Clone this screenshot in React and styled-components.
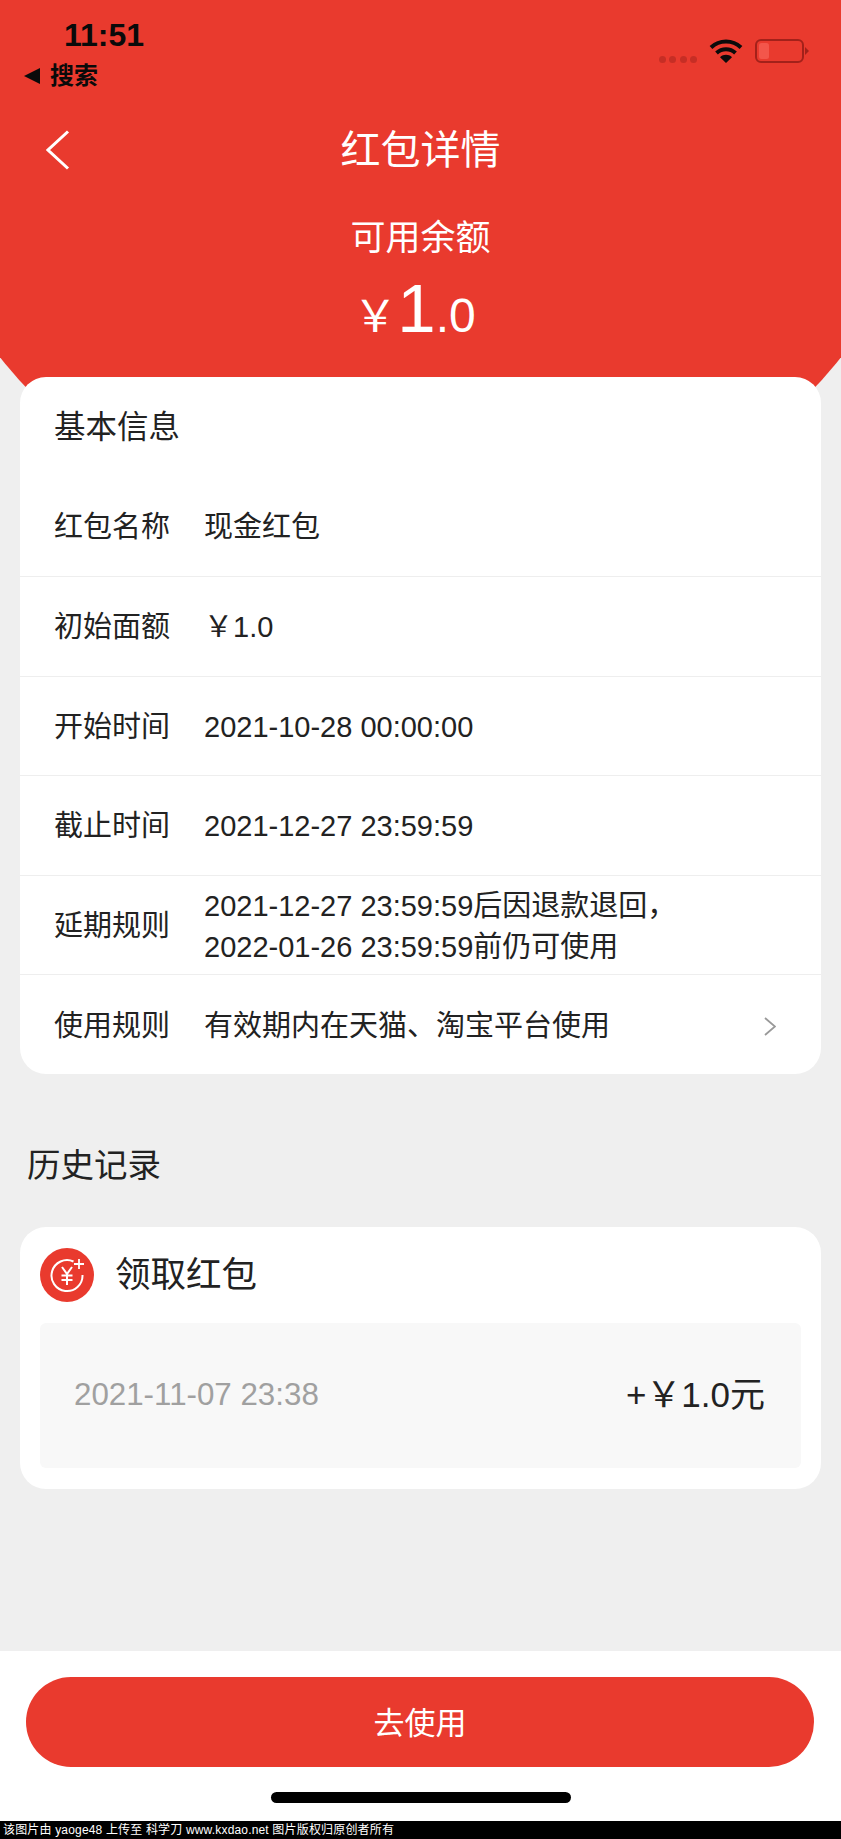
import React from 'react';
import styled, { createGlobalStyle } from 'styled-components';

const RED = '#e93a2e';

const GlobalStyle = createGlobalStyle`
    html, body {
	margin: 0;
	padding: 0;
	background: #efefef;
    }
    body {
	font-family: "Liberation Sans", "Noto Sans CJK SC", sans-serif;
	color: #222;
    }
    * {
	box-sizing: border-box;
    }
`;

const Page = styled.div`
    width: 841px;
    height: 1839px;
    display: flex;
    flex-direction: column;
    overflow: hidden;
    background: #efefef;
`;

// The red block is a big ellipse cut by the page edges, the card covers its lower part
const Header = styled.header`
    height: 451px;
    margin-bottom: -74px;
    background: ${RED};
    clip-path: ellipse(500px 411px at 50% 135px);
    flex-shrink: 0;
`;

const StatusBar = styled.div`
    height: 120px;
    padding: 17px 32px 0 24px;
    display: flex;
    justify-content: space-between;
    align-items: flex-start;
`;

const StatusLeft = styled.div`
    display: flex;
    flex-direction: column;
`;

const Clock = styled.div`
    font-size: 32px;
    line-height: 36px;
    font-weight: 700;
    color: #0a0a0a;
    padding-left: 40px;
`;

const BackApp = styled.div`
    margin-top: 5px;
    display: flex;
    align-items: center;
    gap: 10px;
    font-size: 24px;
    line-height: 36px;
    font-weight: 700;
    color: #0a0a0a;
`;

const Triangle = styled.span`
    width: 0;
    height: 0;
    border-top: 8px solid transparent;
    border-bottom: 8px solid transparent;
    border-right: 16px solid #0a0a0a;
`;

const StatusRight = styled.div`
    display: flex;
    align-items: flex-start;
    margin-top: 21px;
`;

const Dots = styled.div`
    display: flex;
    gap: 3.300px;
    margin: 18px 12px 0 0;
`;

const Dot = styled.span`
    width: 7px;
    height: 7px;
    border-radius: 50%;
    background: #c62e25;
`;

const BatterySvg = styled.svg`
    margin: 1px 0 0 12px;
`;

const NavBar = styled.div`
    height: 60px;
    display: grid;
    grid-template-columns: 1fr auto 1fr;
    align-items: center;
`;

const BackButton = styled.div`
    padding-left: 46px;
    display: flex;
    align-items: center;
`;

const Title = styled.h1`
    margin: 0;
    font-size: 40px;
    line-height: 60px;
    font-weight: 400;
    color: #fff;
`;

const BalanceLabel = styled.div`
    margin-top: 36px;
    text-align: center;
    font-size: 35px;
    line-height: 44px;
    color: #fff;
`;

const Amount = styled.div`
    margin-top: 11px;
    display: flex;
    justify-content: center;
    align-items: baseline;
    color: #fff;
    line-height: 76px;
    padding-right: 12px;
`;

const AmountPart = styled.span`
    font-size: ${props => props.size}px;
`;

const Card = styled.section`
    margin: 0 20px;
    background: #fff;
    border-radius: 26px;
    overflow: hidden;
    flex-shrink: 0;
    position: relative;
`;

const CardTitle = styled.h2`
    margin: 0;
    height: 99px;
    padding: 1px 34px 0;
    font-size: 31.500px;
    line-height: 99px;
    font-weight: 400;
    color: #222;
`;

const Row = styled.div`
    height: ${props => props.first ? '100px' : '99.6px'};
    padding: 3px 45px 0 34px;
    display: flex;
    align-items: center;
    font-size: 29px;
    line-height: 41px;
    border-top: ${props => props.first ? 'none' : '1px solid #eeeeee'};
`;

const RowLabel = styled.span`
    width: 150px;
    flex-shrink: 0;
    color: #222;
`;

const RowValue = styled.div`
    flex: 1;
    color: #222;
`;

const HistoryTitle = styled.h2`
    margin: 62px 0 31px;
    padding-left: 27px;
    font-size: 33.500px;
    line-height: 60px;
    font-weight: 400;
    color: #222;
`;

const HistoryCard = styled(Card)`
    height: 262px;
    padding: 21px 20px 0;
`;

const HistoryHead = styled.div`
    height: 54px;
    display: flex;
    align-items: center;
    gap: 21px;
    font-size: 35.500px;
    line-height: 50px;
    color: #222;
`;

const HistoryBox = styled.div`
    margin-top: 21px;
    height: 145px;
    padding: 0 36px 0 34px;
    display: flex;
    justify-content: space-between;
    align-items: center;
    background: #f8f8f8;
    border-radius: 6px;
`;

const HistoryDate = styled.span`
    font-size: 31.300px;
    line-height: 50px;
    color: #a0a0a0;
`;

const HistoryAmount = styled.span`
    font-size: 35px;
    line-height: 50px;
    color: #222;
`;

const Spacer = styled.div`
    flex: 1;
`;

const BottomBar = styled.div`
    height: 170px;
    padding: 26px 27px 0 26px;
    background: #fff;
    display: flex;
    flex-direction: column;
    align-items: center;
`;

const UseButton = styled.button`
    width: 100%;
    height: 90px;
    border: none;
    border-radius: 45px;
    background: ${RED};
    color: #fff;
    font-family: inherit;
    font-size: 31px;
    padding: 0 0 4px;
`;

const HomeIndicator = styled.div`
    margin-top: 25px;
    margin-left: 2px;
    width: 300px;
    height: 11px;
    border-radius: 6px;
    background: #000;
`;

const Watermark = styled.div`
    height: 18px;
    padding-left: 3px;
    background: #000;
    color: #fff;
    font-size: 12px;
    line-height: 18px;
    letter-spacing: 0.170px;
    white-space: pre;
`;

const WifiIcon = () => (
    <svg width="34" height="25" viewBox="0 0 34 25">
	<path d="M2 9.500C10.500 1.500 23.500 1.500 32 9.500" fill="none" stroke="#0b0b0b" strokeWidth="4" />
	<path d="M7.500 15C13 10 21 10 26.500 15" fill="none" stroke="#0b0b0b" strokeWidth="4" />
	<path d="M11 19.200L17 25L23 19.200C19.500 16 14.500 16 11 19.200Z" fill="#0b0b0b" />
    </svg>
);

const BatteryIcon = () => (
    <BatterySvg width="54" height="24" viewBox="0 0 54 24">
	<rect x="1" y="1" width="47" height="22" rx="5" fill="none" stroke="#a3211a" strokeWidth="2" />
	<rect x="4" y="4" width="10" height="16" rx="2.500" fill="#f3564b" />
	<path d="M50 8L54 12L50 16Z" fill="#a3211a" />
    </BatterySvg>
);

const BackIcon = () => (
    <svg width="24" height="40" viewBox="0 0 24 40">
	<path d="M22 1.500L2 20L22 38.500" fill="none" stroke="#fff" strokeWidth="3" />
    </svg>
);

const ChevronIcon = () => (
    <svg width="12" height="19" viewBox="0 0 12 19">
	<path d="M1 1L11 9.500L1 18" fill="none" stroke="#999" strokeWidth="1.800" />
    </svg>
);

const ReceiveIcon = () => (
    <svg width="54" height="54" viewBox="0 0 54 54">
	<circle cx="27" cy="27" r="27" fill={RED} />
	<path d="M33.500 13.500A15.500 15.500 0 1 0 42.500 27" fill="none" stroke="#fff" strokeWidth="2" />
	<path d="M39 11V21M34 16H44" fill="none" stroke="#fff" strokeWidth="1.800" />
	<path d="M22 19L27 26L32 19M27 26V37M21.500 27.500H32.500M21.500 32H32.500" fill="none" stroke="#fff" strokeWidth="2" />
    </svg>
);

const App = () => (
    <Page>
	<GlobalStyle />
	<Header>
	    <StatusBar>
		<StatusLeft>
		    <Clock>11:51</Clock>
		    <BackApp><Triangle />搜索</BackApp>
		</StatusLeft>
		<StatusRight>
		    <Dots>
			<Dot /><Dot /><Dot /><Dot />
		    </Dots>
		    <WifiIcon />
		    <BatteryIcon />
		</StatusRight>
	    </StatusBar>
	    <NavBar>
		<BackButton><BackIcon /></BackButton>
		<Title>红包详情</Title>
		<span />
	    </NavBar>
	    <BalanceLabel>可用余额</BalanceLabel>
	    <Amount>
		<AmountPart size={44}>￥</AmountPart>
		<AmountPart size={69}>1</AmountPart>
		<AmountPart size={48}>.0</AmountPart>
	    </Amount>
	</Header>

	<Card>
	    <CardTitle>基本信息</CardTitle>
	    <Row first>
		<RowLabel>红包名称</RowLabel>
		<RowValue>现金红包</RowValue>
	    </Row>
	    <Row>
		<RowLabel>初始面额</RowLabel>
		<RowValue>￥1.0</RowValue>
	    </Row>
	    <Row>
		<RowLabel>开始时间</RowLabel>
		<RowValue>2021-10-28 00:00:00</RowValue>
	    </Row>
	    <Row>
		<RowLabel>截止时间</RowLabel>
		<RowValue>2021-12-27 23:59:59</RowValue>
	    </Row>
	    <Row>
		<RowLabel>延期规则</RowLabel>
		<RowValue>
		    2021-12-27 23:59:59后因退款退回，<br />
		    2022-01-26 23:59:59前仍可使用
		</RowValue>
	    </Row>
	    <Row>
		<RowLabel>使用规则</RowLabel>
		<RowValue>有效期内在天猫、淘宝平台使用</RowValue>
		<ChevronIcon />
	    </Row>
	</Card>

	<HistoryTitle>历史记录</HistoryTitle>
	<HistoryCard>
	    <HistoryHead>
		<ReceiveIcon />
		领取红包
	    </HistoryHead>
	    <HistoryBox>
		<HistoryDate>2021-11-07 23:38</HistoryDate>
		<HistoryAmount>+￥1.0元</HistoryAmount>
	    </HistoryBox>
	</HistoryCard>

	<Spacer />
	<BottomBar>
	    <UseButton>去使用</UseButton>
	    <HomeIndicator />
	</BottomBar>
	<Watermark>该图片由 yaoge48 上传至 科学刀 www.kxdao.net 图片版权归原创者所有</Watermark>
    </Page>
);

export default App;
